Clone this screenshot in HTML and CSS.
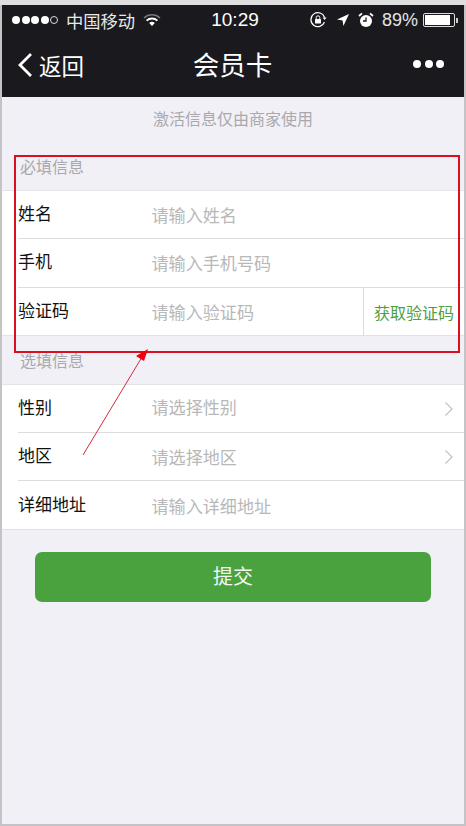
FILE: index.html
```html
<!DOCTYPE html>
<html lang="zh">
<head>
<meta charset="utf-8">
<title>会员卡</title>
<link rel="stylesheet" href="styles.css">
</head>
<body>
<div class="screen">
  <header class="top">
    <div class="status">
      <div class="status-left">
        <span class="signal"><i></i><i></i><i></i><i></i><i class="off"></i></span>
        <span class="carrier">中国移动</span>
        <svg class="wifi" width="18" height="14" viewBox="0 0 18 14"><path d="M1 5a11.5 11.5 0 0 1 16 0" fill="none" stroke="#77777b" stroke-width="1.6"/><path d="M3.6 7.6a8 8 0 0 1 10.8 0" fill="none" stroke="#fff" stroke-width="1.8"/><path d="M6.2 10a4.2 4.2 0 0 1 5.6 0L9 13z" fill="#fff"/></svg>
      </div>
      <div class="time">10:29</div>
      <div class="status-right">
        <svg width="18" height="18" viewBox="0 0 18 18"><path d="M15.5 11A7 7 0 1 1 15.6 6.5" fill="none" stroke="#fff" stroke-width="1.2"/><path d="M13.6 6.5h4l-2 2.6z" fill="#fff"/><rect x="6" y="8" width="6" height="4.6" rx=".6" fill="#fff"/><path d="M7.2 8V6.6a1.8 1.8 0 0 1 3.6 0V8" fill="none" stroke="#fff" stroke-width="1"/></svg>
        <svg class="loc" width="14" height="14" viewBox="0 0 14 14"><path d="M13 1 1 6.6l5.6.8.8 5.6z" fill="#fff"/></svg>
        <svg class="alarm" width="16" height="16" viewBox="0 0 16 16"><circle cx="8" cy="9" r="6" fill="#fff"/><path d="M8 5.5V9H5" fill="none" stroke="#1a1a1e" stroke-width="1.3"/><path d="M1 4 4 1.4M15 4l-3-2.6" stroke="#fff" stroke-width="1.8"/></svg>
        <span class="pct">89%</span>
        <span class="battery"><span class="battery-fill"></span></span><span class="battery-tip"></span>
      </div>
    </div>
    <nav class="nav">
      <div class="back">
        <svg width="17" height="26" viewBox="0 0 17 26"><path d="M14 2 3 13l11 11" fill="none" stroke="#fff" stroke-width="2.8"/></svg>
        <span>返回</span>
      </div>
      <div class="title">会员卡</div>
      <div class="more"><i></i><i></i><i></i></div>
    </nav>
  </header>

  <main class="content">
    <p class="notice">激活信息仅由商家使用</p>
    <div class="section-label first">必填信息</div>
    <section class="group">
      <div class="row"><span class="label">姓名</span><span class="hint">请输入姓名</span></div>
      <div class="row"><span class="label">手机</span><span class="hint">请输入手机号码</span></div>
      <div class="row"><span class="label">验证码</span><span class="hint">请输入验证码</span><span class="code">获取验证码</span></div>
    </section>
    <div class="section-label">选填信息</div>
    <section class="group">
      <div class="row"><span class="label">性别</span><span class="hint high">请选择性别</span><svg class="chev" width="10" height="16" viewBox="0 0 10 16"><path d="M1.500 1.500 8 8l-6.500 6.500" fill="none" stroke="#c4c4c8" stroke-width="1.300"/></svg></div>
      <div class="row"><span class="label">地区</span><span class="hint">请选择地区</span><svg class="chev" width="10" height="16" viewBox="0 0 10 16"><path d="M1.500 1.500 8 8l-6.500 6.500" fill="none" stroke="#c4c4c8" stroke-width="1.300"/></svg></div>
      <div class="row"><span class="label">详细地址</span><span class="hint">请输入详细地址</span></div>
    </section>
    <button class="submit" type="button">提交</button>
  </main>

  <div class="callout"></div>
  <svg class="arrow" width="80" height="110" viewBox="0 0 80 110"><path d="M3 107 62 9" stroke="#d8283c" stroke-width="1" fill="none"/><path d="M68 1 56 8l8 5z" fill="#f00010"/></svg>
</div>
</body>
</html>
```
FILE: styles.css
```css
* { box-sizing: border-box; }
html, body { margin: 0; height: 100%; }
body {
  background: linear-gradient(#dedede 5px, #c4c4c6 5px);
  font-family: "Liberation Sans", "Noto Sans CJK SC", sans-serif;
  padding: 5px 2px 2px 2px;
  overflow: hidden;
}
.screen {
  position: relative;
  height: 819px;
  background: #f1f0f6;
  display: flex;
  flex-direction: column;
}
.top { background: #1a1a1e; color: #fff; height: 92px; }
.status {
  height: 30px;
  display: flex;
  align-items: center;
  position: relative;
  padding: 0 6px 0 10px;
  justify-content: space-between;
}
.status-left, .status-right { display: flex; align-items: center; }
.signal { display: flex; gap: 1.500px; margin-right: 8px; }
.signal i { width: 8px; height: 8px; border-radius: 50%; background: #fff; }
.signal i.off { background: none; border: 1px solid #ddd; }
.carrier { font-size: 17.300px; color: #e8e8e8; }
.wifi { margin-left: 8px; }
.time { position: absolute; left: 4px; right: 0; text-align: center; font-size: 19px; font-weight: 400; }
.status-right { position: relative; }
.loc { margin-left: 9px; }
.alarm { margin-left: 8px; }
.pct { font-size: 18px; margin-left: 8px; color: #e4e4e4; }
.battery { width: 32px; height: 14px; border: 1px solid #ddd; margin-left: 5px; padding: 1px; border-radius: 2px; display: block; }
.battery-fill { display: block; height: 100%; width: 89%; background: #fff; }
.battery-tip { width: 2px; height: 5px; background: #ccc; margin-left: 1px; }
.nav { height: 62px; position: relative; display: flex; align-items: center; justify-content: space-between; padding: 0 20px 2px 15px; }
.back { display: flex; align-items: center; gap: 5px; font-size: 22.500px; }
.title { position: absolute; left: 0; right: 1px; text-align: center; font-size: 26.500px; padding-bottom: 3px; }
.more { display: flex; gap: 3.500px; padding-bottom: 2px; }
.more i { width: 8px; height: 8px; border-radius: 50%; background: #fff; }
.content { flex: 1; display: flex; flex-direction: column; }
.notice { margin: 0; height: 44px; line-height: 46px; text-align: center; font-size: 16px; color: #a9a9ad; }
.section-label { height: 48px; padding: 15px 0 0 18px; font-size: 16px; line-height: 22px; color: #a9a9ad; }
.section-label.first { height: 49px; padding-top: 16px; }
.group { background: #fff; border-top: 1px solid #e4e4e6; display: flex; flex-direction: column; }
.row { height: 48.300px; display: flex; align-items: center; padding-left: 16px; position: relative; font-size: 17px; }
.row::after { content: ""; position: absolute; left: 16px; right: 0; bottom: 0; height: 1px; background: #dcdcde; }
.row:last-child::after { left: 0; background: #e2e2e4; }
.label { width: 134px; color: #111; padding-bottom: 5px; }
.hint { flex: 1; color: #b8b8b8; padding-bottom: 1px; margin-left: -0.500px; font-size: 17.100px; }
.hint.high { padding-bottom: 5px; }
.code { width: 101px; align-self: stretch; border-left: 1px solid #dcdcde; color: #4ba03f; font-size: 16px; display: flex; align-items: center; padding-left: 10px; padding-top: 1px; }
.chev { margin-right: 10px; }
.submit {
  margin: 22px 33px 0;
  height: 50px;
  border: 0;
  border-radius: 7px;
  background: #4aa23f;
  color: #f2f8f0;
  font: inherit;
  font-size: 20px;
  padding-bottom: 3px;
}
.callout { position: absolute; left: 12px; top: 150px; width: 446px; height: 198px; border: 2px solid #d81020; }
.arrow { position: absolute; left: 78px; top: 343px; }
```
